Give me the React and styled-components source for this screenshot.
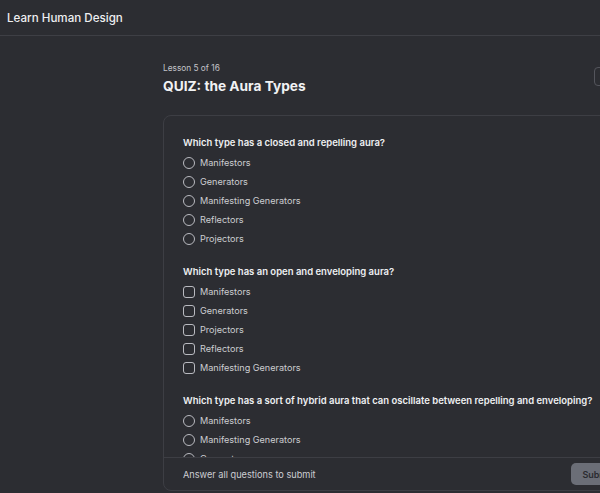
import React from 'react'
import styled, { createGlobalStyle } from 'styled-components'

const GlobalStyle = createGlobalStyle`
  html, body {
    margin: 0;
    padding: 0;
    background: #2c2d32;
    overflow: hidden;
  }
  body {
    font-family: Inter, 'Noto Sans', 'Liberation Sans', sans-serif;
    color: #e8e9ec;
  }
`

const Page = styled.div`
  height: 100vh;
  display: flex;
  flex-direction: column;
  background: #2c2d32;
`

const TopBar = styled.header`
  height: 35px;
  flex-shrink: 0;
  display: flex;
  align-items: center;
  padding: 0 7px;
  border-bottom: 1px solid #3e3f45;
  font-size: 11.6px;
  font-weight: 500;
  color: #eeeff1;
`

const Main = styled.main`
  flex: 1;
  min-height: 0;
  display: flex;
  padding: 25px 0 2px 163px;
`

const Column = styled.div`
  width: 482px;
  flex-shrink: 0;
  display: flex;
  flex-direction: column;
`

const TitleRow = styled.div`
  display: flex;
  justify-content: space-between;
  align-items: flex-start;
  margin-bottom: 20px;
`

const Lesson = styled.div`
  font-size: 8.3px;
  color: #c3c4c9;
  line-height: 14px;
  margin-bottom: 2px;
`

const Title = styled.h1`
  margin: 0;
  font-size: 13.7px;
  font-weight: 700;
  line-height: 18px;
  color: #f1f2f4;
`

const GhostButton = styled.button`
  margin-top: 6px;
  width: 51px;
  height: 19px;
  border: 1px solid #54555c;
  border-radius: 4px;
  background: transparent;
  color: #ddd;
  font: inherit;
  font-size: 9px;
`

const Card = styled.section`
  flex: 1;
  min-height: 0;
  display: flex;
  flex-direction: column;
  border: 1px solid #3d3e44;
  border-radius: 8px;
  overflow: hidden;
`

const Questions = styled.div`
  flex: 1;
  min-height: 0;
  overflow: hidden;
  padding: 19px 19px 0;
  display: flex;
  flex-direction: column;
  gap: 16px;
`

const Question = styled.div``

const Prompt = styled.div`
  font-size: 9.5px;
  font-weight: 600;
  line-height: 16px;
  color: #eeeff1;
  margin-bottom: 2px;
  white-space: nowrap;
`

const Option = styled.label`
  height: 19px;
  display: flex;
  align-items: center;
  gap: 5px;
  font-size: 9.1px;
  color: #cccdd1;
`

const Mark = styled.span`
  width: 10px;
  height: 10px;
  border: 1px solid #b9bac0;
  border-radius: ${(p) => (p.$square ? '3px' : '50%')};
  flex-shrink: 0;
`

const Footer = styled.footer`
  height: 32px;
  flex-shrink: 0;
  border-top: 1px solid #3d3e44;
  display: flex;
  align-items: center;
  justify-content: space-between;
  padding: 0 20px 0 19px;
  font-size: 9.2px;
  color: #cdced2;
`

const SubmitButton = styled.button`
  height: 22px;
  padding: 0 11px;
  border: none;
  border-radius: 5px;
  background: #6b6e77;
  color: #2a2b30;
  font: inherit;
  font-size: 9px;
  font-weight: 600;
`

const quiz = [
  {
    prompt: 'Which type has a closed and repelling aura?',
    multi: false,
    options: ['Manifestors', 'Generators', 'Manifesting Generators', 'Reflectors', 'Projectors'],
  },
  {
    prompt: 'Which type has an open and enveloping aura?',
    multi: true,
    options: ['Manifestors', 'Generators', 'Projectors', 'Reflectors', 'Manifesting Generators'],
  },
  {
    prompt: 'Which type has a sort of hybrid aura that can oscillate between repelling and enveloping?',
    multi: false,
    options: ['Manifestors', 'Manifesting Generators', 'Generators', 'Projectors', 'Reflectors'],
  },
]

const App = () => {
  return (
    <Page>
      <GlobalStyle />
      <TopBar>Learn Human Design</TopBar>
      <Main>
        <Column>
          <TitleRow>
            <div>
              <Lesson>Lesson 5 of 16</Lesson>
              <Title>QUIZ: the Aura Types</Title>
            </div>
            <GhostButton>Next</GhostButton>
          </TitleRow>
          <Card>
            <Questions>
              {quiz.map((q) => (
                <Question key={q.prompt}>
                  <Prompt>{q.prompt}</Prompt>
                  {q.options.map((opt) => (
                    <Option key={opt}>
                      <Mark $square={q.multi} />
                      {opt}
                    </Option>
                  ))}
                </Question>
              ))}
            </Questions>
            <Footer>
              <span>Answer all questions to submit</span>
              <SubmitButton>Submit</SubmitButton>
            </Footer>
          </Card>
        </Column>
      </Main>
    </Page>
  )
}

export default App
